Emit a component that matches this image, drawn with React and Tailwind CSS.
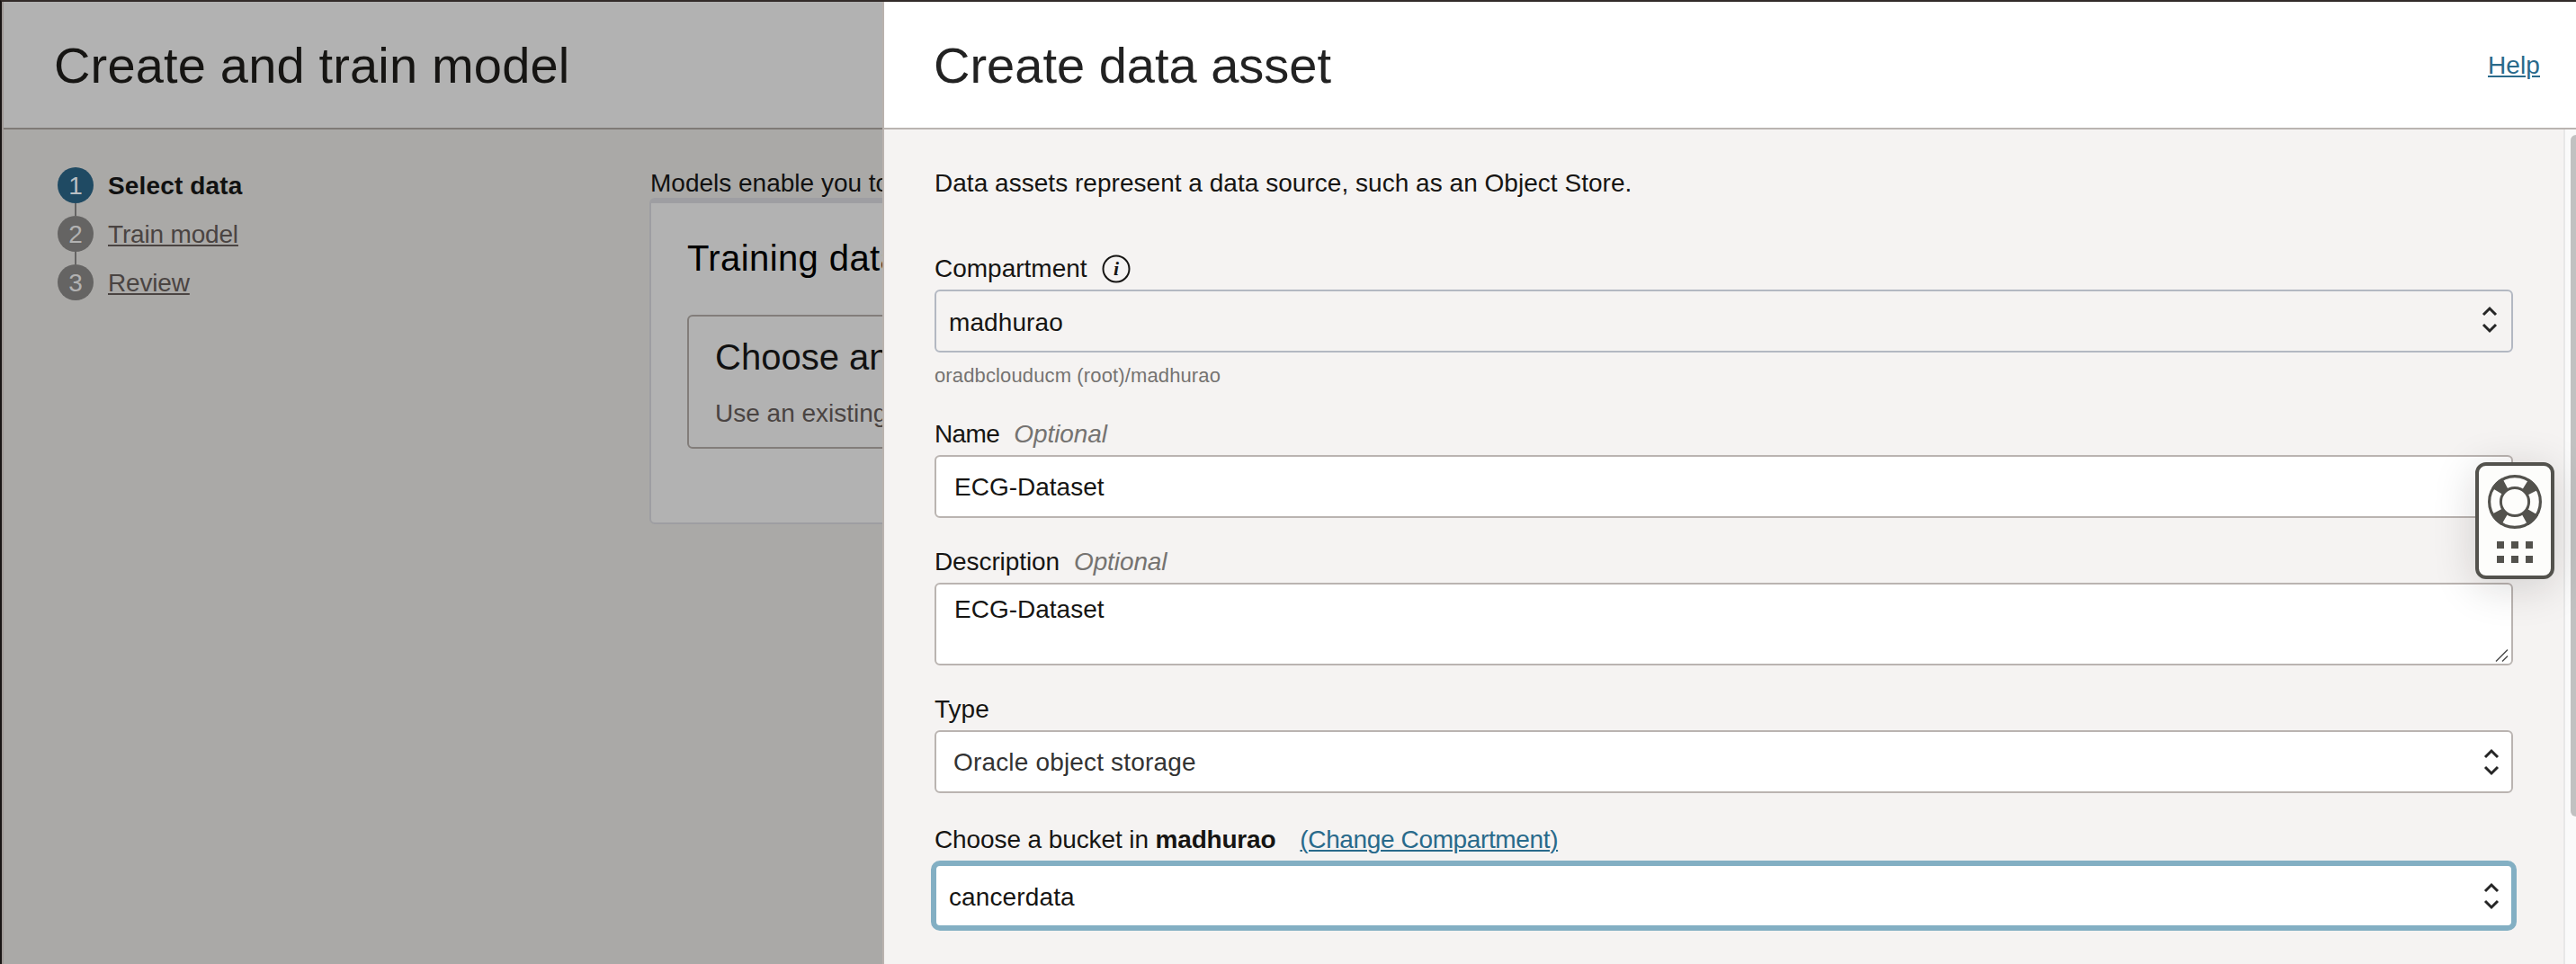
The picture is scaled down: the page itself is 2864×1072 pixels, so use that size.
import React from "react";

const Spinner = ({ className = "" }) => (
  <svg className={className} width="20" height="32" viewBox="0 0 20 32" fill="none" stroke="#262626" strokeWidth="3">
    <path d="M3 11 L10 4 L17 11" />
    <path d="M3 22 L10 29 L17 22" />
  </svg>
);

const Step = ({ n, label, active, last }) => (
  <li className="flex h-[54px] items-start">
    <div className="flex w-10 flex-col items-center">
      <span className={`flex h-10 w-10 items-center justify-center rounded-full pt-px text-[28px] leading-none ${active ? "bg-[#1f4a63] text-[#b9bfc3]" : "bg-[#656463] text-[#b2b2b2]"}`}>{n}</span>
      {!last && <span className="h-[14px] w-[2px] bg-[#656463]" />}
    </div>
    <span className={`ml-4 mt-px text-[28px] leading-10 ${active ? "font-bold tracking-[0.15px] text-[#111111]" : "tracking-[-0.17px] text-[#4a4442] underline decoration-2 underline-offset-[2px]"}`}>{label}</span>
  </li>
);

const Label = ({ children, optional, className = "" }) => (
  <div className="flex h-10 items-center text-[28px] leading-10">
    <span className={className}>{children}</span>
    {optional && <span className="ml-4 italic tracking-[-0.1px] text-[#757371]">Optional</span>}
  </div>
);

const LifeRing = () => (
  <svg width="60" height="60" viewBox="0 0 60 60" fill="none" stroke="#53524d">
    <circle cx="30" cy="30" r="22.5" strokeWidth="15" strokeDasharray="12 23.343" strokeDashoffset="-11.67" />
    <circle cx="30" cy="30" r="28.4" strokeWidth="3.2" />
    <circle cx="30" cy="30" r="15.6" strokeWidth="3" />
  </svg>
);

export default function App() {
  return (
    <div className="relative flex h-[1072px] w-[2864px] overflow-hidden border-l-2 border-t-2 border-l-[#191514] border-t-[#322b29] bg-[#aaa9a7] font-['Liberation_Sans',sans-serif] text-[28px] text-[#161513]">
      <section className="flex w-[979px] shrink-0 flex-col overflow-hidden border-l-2 border-[#9f9996]">
        <header className="flex h-[142px] shrink-0 items-center border-b-2 border-[#7f7a77] bg-[#b2b2b2] pl-[56px]">
          <h1 className="whitespace-nowrap pt-px text-[56px] leading-none tracking-[0.17px]">Create and train model</h1>
        </header>
        <div className="flex flex-1">
          <ol className="w-[718px] shrink-0 pl-[60px] pt-[42px]">
            <Step n="1" label="Select data" active />
            <Step n="2" label="Train model" />
            <Step n="3" label="Review" last />
          </ol>
          <div className="w-[1200px] shrink-0 pt-[40px]">
            <p className="h-9 whitespace-nowrap pl-px text-[28px] leading-10 text-[#111111]">Models enable you to</p>
            <div className="h-[363px] rounded-md border-2 border-t-[6px] border-[#9e9ea2] bg-[#b2b2b2] pl-10 pt-[38px]">
              <h2 className="whitespace-nowrap text-[40px] leading-[46px] tracking-[0.4px] text-black">Training data</h2>
              <div className="mt-10 h-[149px] rounded-md border-2 border-[#827d7a] pl-[29px] pt-[22px]">
                <h3 className="whitespace-nowrap text-[40px] leading-[46px] text-[#111111]">Choose an</h3>
                <p className="mt-[24px] whitespace-nowrap text-[28px] leading-[32px] text-[#4a4442]">Use an existing</p>
              </div>
            </div>
          </div>
        </div>
      </section>
      <section className="flex min-w-0 flex-1 flex-col border-l-2 border-[#b9b2ae] bg-[#f5f3f2]">
        <header className="flex h-[142px] shrink-0 items-center justify-between border-b-2 border-[#bab4b1] bg-white pl-[55px] pr-[40px]">
          <h1 className="pt-px text-[56px] leading-none text-[#222222]">Create data asset</h1>
          <a className="pt-[2px] tracking-[0.1px] text-[#296a8b] underline decoration-2 underline-offset-[2px]">Help</a>
        </header>
        <div className="flex min-h-0 flex-1">
          <form className="w-[1867px] shrink-0 px-[56px] pt-[40px]">
            <p className="h-10 leading-10 tracking-[0.03px]">Data assets represent a data source, such as an Object Store.</p>
            <div className="mt-[55px] flex items-center">
              <Label>Compartment</Label>
              <svg className="ml-4" width="32" height="32" viewBox="0 0 32 32" fill="none">
                <circle cx="16" cy="16" r="14.5" stroke="#161513" strokeWidth="2" />
                <text x="16" y="23" textAnchor="middle" fontFamily="Liberation Serif, serif" fontStyle="italic" fontWeight="bold" fontSize="22" fill="#161513">i</text>
              </svg>
            </div>
            <div className="mt-[3px] flex h-[70px] items-center justify-between rounded-md border-2 border-[#b3b8c2] pl-[14px] pr-[14px]">
              <span className="pt-[4px] tracking-[0.1px]">madhurao</span><Spinner className="mb-[4px]" />
            </div>
            <p className="mt-[9px] h-[34px] text-[22px] leading-[34px] tracking-[0.13px] text-[#757371]">oradbclouducm (root)/madhurao</p>
            <div className="mt-[28px]"><Label optional className="tracking-[-0.6px]">Name</Label></div>
            <div className="mt-[3px] flex h-[70px] items-center rounded-md border-2 border-[#bab4b1] bg-white pl-5 pt-px">ECG-Dataset</div>
            <div className="mt-[29px]"><Label optional className="tracking-[-0.1px]">Description</Label></div>
            <div className="mt-[3px] flex h-[92px] items-start justify-between rounded-md border-2 border-[#bab4b1] bg-white pl-5">
              <span className="pt-[8px] leading-10">ECG-Dataset</span>
              <svg className="self-end" width="18" height="18" viewBox="0 0 18 18" fill="none" stroke="#4c4c4c" strokeWidth="1.5"><path d="M1 15.5 L14 2.500 M8 15.500 L14 9.500" /></svg>
            </div>
            <div className="mt-[29px]"><Label>Type</Label></div>
            <div className="mt-[3px] flex h-[70px] items-center justify-between rounded-md border-2 border-[#bab4b1] bg-white pl-[19px] pr-[12px] text-[#333333]">
              <span className="pt-px tracking-[0.17px]">Oracle object storage</span><Spinner />
            </div>
            <div className="mt-[32px] flex h-10 items-center leading-10">
              <span className="tracking-[-0.1px]">Choose a bucket in <b className="tracking-[-0.2px]">madhurao</b></span>
              <a className="ml-[27px] tracking-[-0.37px] text-[#296a8b] underline decoration-2 underline-offset-[2px]">(Change Compartment)</a>
            </div>
            <div className="-mx-1 mt-[3px] flex h-[78px] items-center justify-between rounded-[10px] border-[6px] border-[#83afc3] bg-white pl-[14px] pr-[12px]">
              <span className="pt-[3px] tracking-[0.12px]">cancerdata</span><Spinner />
            </div>
          </form>
          <div className="flex-1 border-l-2 border-[#e8e8e8] bg-[#fafafa] pl-[6px] pt-[6px]">
            <div className="h-[758px] rounded-l-lg bg-[#c1c1c1]" />
          </div>
        </div>
      </section>
      <aside className="absolute left-[2750px] top-[512px] flex h-[130px] w-[88px] flex-col items-center rounded-xl border-4 border-[#53524d] bg-[#fdfdfb] pt-[10px] shadow-[0_8px_48px_rgba(22,21,19,0.16)]">
        <LifeRing />
        <div className="mt-[14px] grid grid-cols-3 gap-2">
          {[0, 1, 2, 3, 4, 5].map((i) => <span key={i} className="h-2 w-2 bg-[#53524d]" />)}
        </div>
      </aside>
    </div>
  );
}
